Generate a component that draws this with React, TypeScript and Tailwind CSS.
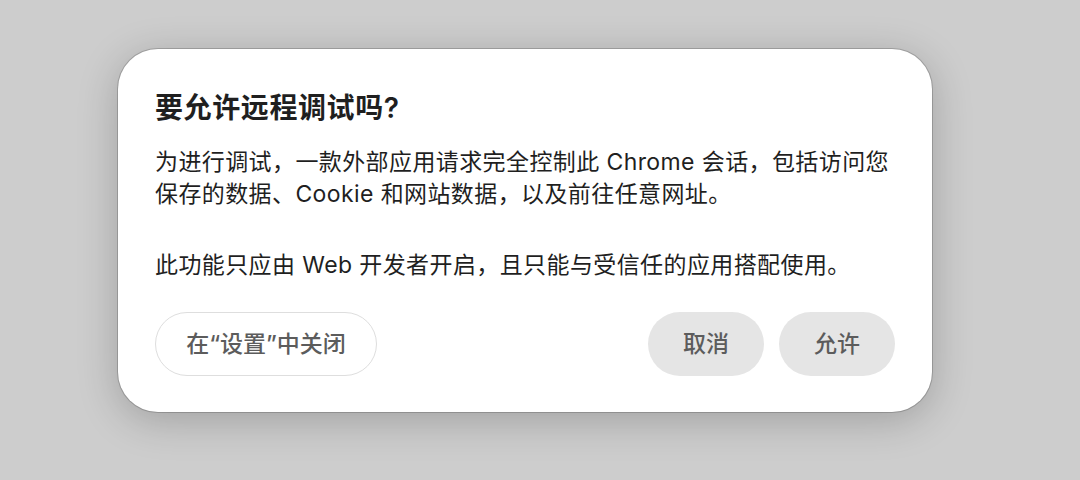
import React from "react";

export default function App() {
  return (
    <div
      className="w-[1080px] h-[480px] bg-[#cdcdcd] pt-[49px] pl-[118px] overflow-hidden"
      style={{ fontFamily: 'Inter, "Noto Sans CJK SC", sans-serif' }}
    >
      {/* Dialog */}
      <div className="w-[814px] h-[363px] bg-white rounded-[40px] shadow-[0_0_0_1px_rgba(0,0,0,0.18),0_8px_40px_rgba(0,0,0,0.22)] pt-[41px] px-[37px] flex flex-col">
        <h1 className="text-[28px] leading-[36px] tracking-[0.6px] font-semibold text-[#1f1f1f]">要允许远程调试吗?</h1>
        <p className="mt-[20px] text-[23px] leading-[32px] tracking-[0.4px] text-[#1f1f1f] whitespace-nowrap">
          为进行调试，一款外部应用请求完全控制此 Chrome 会话，包括访问您
          <br />
          保存的数据、Cookie 和网站数据，以及前往任意网址。
        </p>
        <p className="mt-[39px] text-[23px] leading-[32px] tracking-[0.4px] text-[#1f1f1f] whitespace-nowrap">
          此功能只应由 Web 开发者开启，且只能与受信任的应用搭配使用。
        </p>
        <div className="mt-[31px] flex items-center">
          <button className="h-[64px] w-[222px] rounded-full border border-[#dedede] bg-white text-[23px] font-medium text-[#5c5c5c]">
            在“设置”中关闭
          </button>
          <div className="ml-auto flex gap-[15px]">
            <button className="h-[64px] w-[116px] rounded-full bg-[#e5e5e5] text-[23px] font-medium text-[#5c5c5c]">
              取消
            </button>
            <button className="h-[64px] w-[116px] rounded-full bg-[#e5e5e5] text-[23px] font-medium text-[#5c5c5c]">
              允许
            </button>
          </div>
        </div>
      </div>
    </div>
  );
}
